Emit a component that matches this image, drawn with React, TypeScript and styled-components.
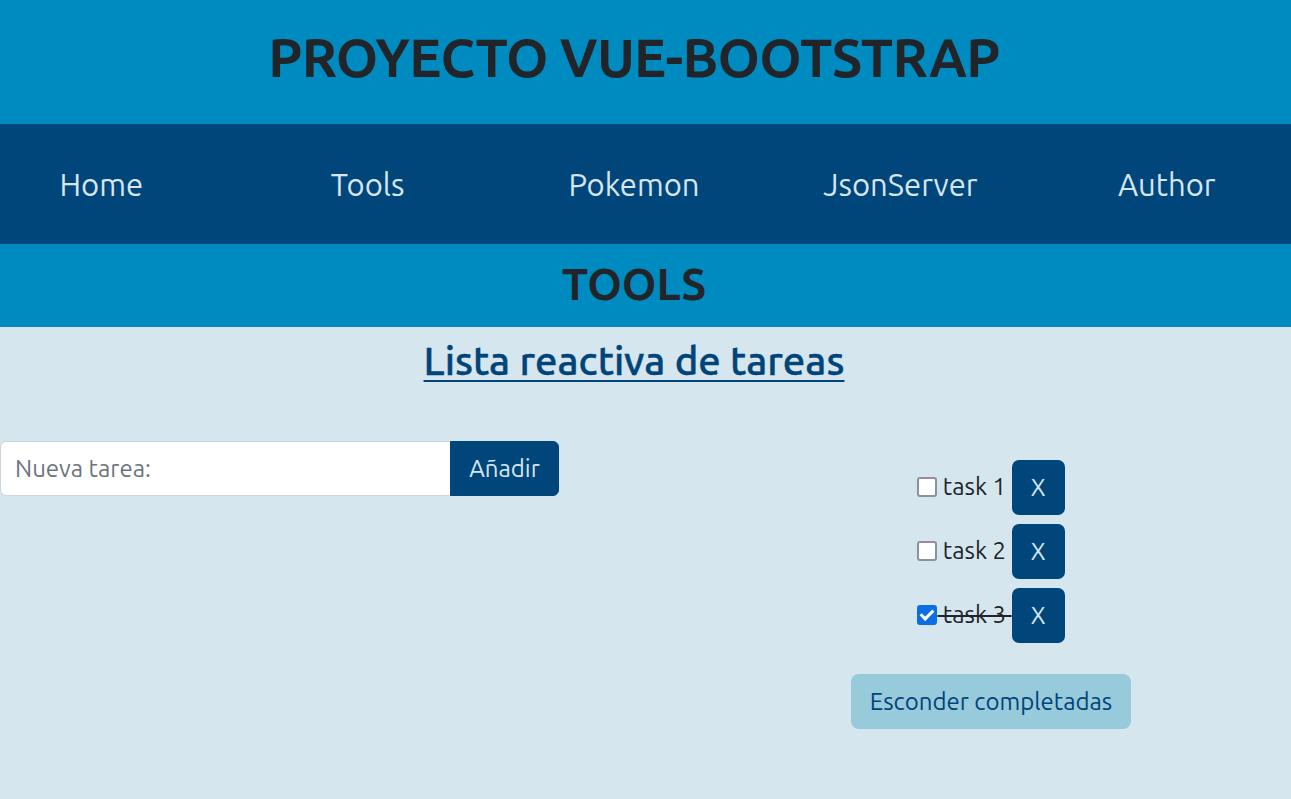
import React, { useState } from 'react';
import styled, { createGlobalStyle } from 'styled-components';

const GlobalStyle = createGlobalStyle`
  body {
    margin: 0;
    background: #d6e6ee;
    font-family: Ubuntu, "Open Sans", "Noto Sans", sans-serif;
    color: #212529;
    overflow-x: hidden;
  }
`;

const Container = styled.div`
  width: 1268px;
`;

const Header = styled.header`
  background: #008bc0;
  height: 124px;
  display: flex;
  align-items: center;
`;

const Title = styled.h1`
  margin: 0 0 10px;
  text-align: center;
  font-size: 54px;
  font-weight: 700;
  line-height: 1.2;
  letter-spacing: -0.7px;
  color: #212529;
`;

const Nav = styled.nav`
  background: #01467a;
  height: 120px;
  display: flex;
  align-items: center;
`;

const NavRow = styled.div`
  display: grid;
  grid-template-columns: repeat(5, 1fr);
  margin: 0 -32px;
`;

const NavLink = styled.a`
  text-align: center;
  font-size: 31px;
  font-weight: 400;
  color: #d6e6ee;
  text-decoration: none;
  cursor: pointer;
`;

const Band = styled.div`
  background: #008bc0;
  height: 83px;
  display: flex;
  align-items: center;
`;

const BandTitle = styled.h2`
  margin: 0 0 2px;
  text-align: center;
  font-size: 44px;
  font-weight: 700;
  line-height: 1.2;
  color: #212529;
`;

const Heading = styled.h3`
  margin: 10px 0 0;
  text-align: center;
  font-size: 40px;
  font-weight: 500;
  line-height: 1.2;
  color: #004479;
  text-decoration: underline;
  text-decoration-thickness: 2px;
  text-underline-offset: 5px;
  -webkit-text-stroke: 0.4px #004479;
`;

const Columns = styled.div`
  display: grid;
  grid-template-columns: 714px 1fr;
  margin-top: 56px;
`;

const InputGroup = styled.form`
  display: flex;
  width: 559px;
  height: 55px;
`;

const TaskInput = styled.input`
  flex: 1;
  min-width: 0;
  border: 1px solid #ced4da;
  border-right: none;
  border-radius: 6px 0 0 6px;
  padding: 0 14px;
  font: inherit;
  font-size: 24px;
  color: #212529;
  outline: none;
  &::placeholder {
    color: #6c757d;
  }
`;

const AddButton = styled.button`
  width: 109px;
  border: 1px solid #01467a;
  border-radius: 0 6px 6px 0;
  background: #01467a;
  color: #d6e6ee;
  font: inherit;
  font-size: 24px;
  cursor: pointer;
`;

const TaskColumn = styled.div`
  display: flex;
  flex-direction: column;
  align-items: center;
  padding-top: 19px;
`;

const TaskList = styled.ul`
  list-style: none;
  margin: 0;
  padding: 0;
  display: flex;
  flex-direction: column;
  gap: 9px;
`;

const TaskRow = styled.li`
  display: flex;
  align-items: center;
  height: 55px;
`;

const Check = styled.input`
  appearance: none;
  position: relative;
  box-sizing: border-box;
  width: 20px;
  height: 20px;
  margin: 0 0 2px;
  border: 2px solid #8f8f9d;
  border-radius: 3px;
  background: #fff;
  cursor: pointer;
  &:checked {
    border-color: #0b6fe3;
    background: #0b6fe3;
  }
  &:checked::after {
    content: '';
    position: absolute;
    left: 4px;
    top: 0px;
    width: 5px;
    height: 10px;
    border: solid #fff;
    border-width: 0 3px 3px 0;
    transform: rotate(45deg);
  }
`;

const TaskLabel = styled.span<{ $done: boolean }>`
  font-size: 24px;
  white-space: pre;
  color: #212529;
  text-decoration: ${({ $done }) => ($done ? 'line-through' : 'none')};
  text-decoration-thickness: 2px;
  margin-bottom: 2px;
`;

const RemoveButton = styled.button`
  width: 53px;
  height: 55px;
  border: none;
  border-radius: 7px;
  background: #01467a;
  color: #d6e6ee;
  font: inherit;
  font-size: 24px;
  cursor: pointer;
`;

const HideButton = styled.button`
  margin-top: 31px;
  height: 55px;
  padding: 0 19px;
  border: none;
  border-radius: 8px;
  background: #97cadb;
  color: #004479;
  font: inherit;
  font-size: 24px;
  cursor: pointer;
`;

const links = ['Home', 'Tools', 'Pokemon', 'JsonServer', 'Author'];

export default function App() {
  const [tasks, setTasks] = useState([
    { id: 1, text: 'task 1', done: false },
    { id: 2, text: 'task 2', done: false },
    { id: 3, text: 'task 3', done: true },
  ]);

  return (
    <>
      <GlobalStyle />
      <Header>
        <Container>
          <Title>PROYECTO VUE-BOOTSTRAP</Title>
        </Container>
      </Header>
      <Nav>
        <Container>
          <NavRow>
            {links.map(l => <NavLink key={l}>{l}</NavLink>)}
          </NavRow>
        </Container>
      </Nav>
      <Band>
        <Container>
          <BandTitle>TOOLS</BandTitle>
        </Container>
      </Band>
      <Container>
        <Heading>Lista reactiva de tareas</Heading>
        <Columns>
          <div>
            <InputGroup onSubmit={e => e.preventDefault()}>
              <TaskInput placeholder="Nueva tarea:" />
              <AddButton type="submit">Añadir</AddButton>
            </InputGroup>
          </div>
          <TaskColumn>
            <TaskList>
              {tasks.map(t => (
                <TaskRow key={t.id}>
                  <Check
                    type="checkbox"
                    checked={t.done}
                    onChange={() => setTasks(ts => ts.map(x => (x.id === t.id ? { ...x, done: !x.done } : x)))}
                  />
                  <TaskLabel $done={t.done}>{` ${t.text} `}</TaskLabel>
                  <RemoveButton onClick={() => setTasks(ts => ts.filter(x => x.id !== t.id))}>X</RemoveButton>
                </TaskRow>
              ))}
            </TaskList>
            <HideButton>Esconder completadas</HideButton>
          </TaskColumn>
        </Columns>
      </Container>
    </>
  );
}
